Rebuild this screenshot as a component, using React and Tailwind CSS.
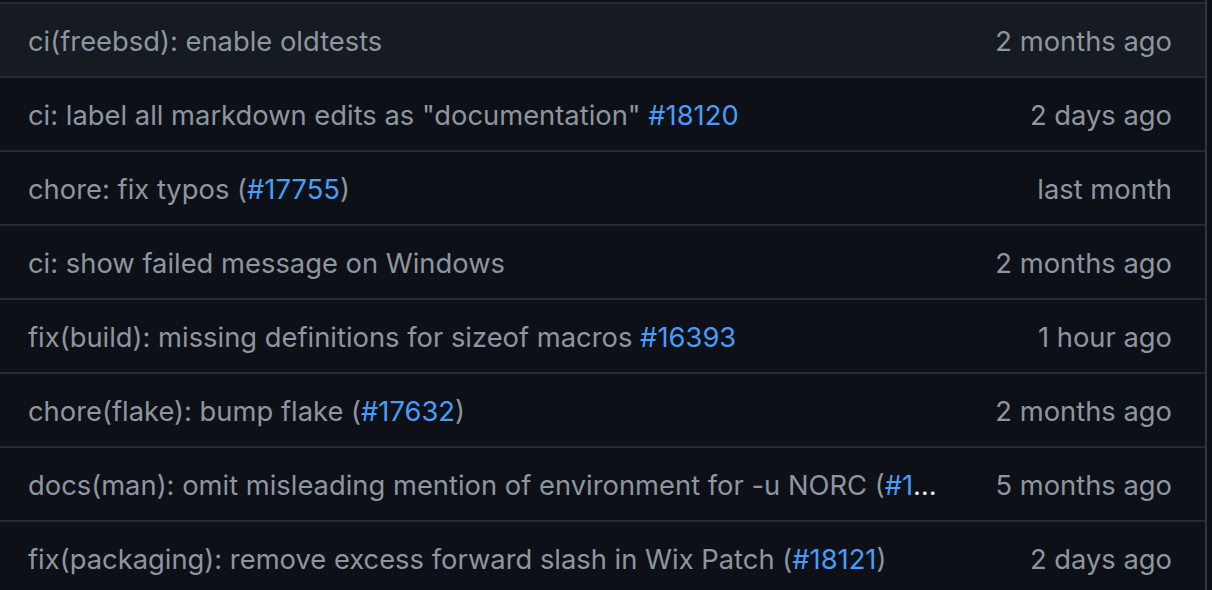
import React from 'react';

const rows = [
  { msg: [['ci(freebsd): enable oldtests']], date: '2 months ago', hover: true },
  { msg: [['ci: label all markdown edits as "documentation" '], ['#18120', 'link']], date: '2 days ago' },
  { msg: [['chore: fix typos ('], ['#17755', 'link'], [')']], date: 'last month' },
  { msg: [['ci: show failed message on Windows']], date: '2 months ago' },
  { msg: [['fix(build): missing definitions for sizeof macros '], ['#16393', 'link']], date: '1 hour ago' },
  { msg: [['chore(flake): bump flake ('], ['#17632', 'link'], [')']], date: '2 months ago' },
  { msg: [['docs(man): omit misleading mention of environment for -u NORC ('], ['#1', 'link']], date: '5 months ago', cut: true },
  { msg: [['fix(packaging): remove excess forward slash in Wix Patch ('], ['#18121', 'link'], [')']], date: '2 days ago' },
];

const App = () => {
  return (
    <div
      className="w-[1212px] h-[590px] overflow-hidden bg-[#0d1117]"
      style={{ fontFamily: 'Inter, "Noto Sans", sans-serif' }}
    >
      <div className="w-[1207px] pt-[2px] border-r-2 border-[#30363d]">
        {rows.map((row, i) => (
          <div
            key={i}
            className={`flex items-center h-[74px] pt-[4px] border-t-2 border-[#262c35] pl-[28px] pr-[33px] ${
              row.hover ? 'bg-[#161b22]' : ''
            }`}
          >
            <div className="flex-1 min-w-0 text-[27.35px] text-[#8d96a0] whitespace-nowrap">
              {row.cut ? (
                <span className="flex items-center">
                  <span>{row.msg[0][0]}</span>
                  <span className="text-[#4a9cfa]">{row.msg[1][0]}</span>
                  <span className="text-[#e6edf3]">…</span>
                </span>
              ) : (
                row.msg.map(([t, kind], j) => (
                  <span key={j} className={kind === 'link' ? 'text-[#4a9cfa]' : ''}>
                    {t}
                  </span>
                ))
              )}
            </div>
            <div className="shrink-0 pl-[40px] text-[27.35px] text-[#8d96a0] whitespace-nowrap text-right">
              {row.date}
            </div>
          </div>
        ))}
      </div>
    </div>
  );
};

export default App;
